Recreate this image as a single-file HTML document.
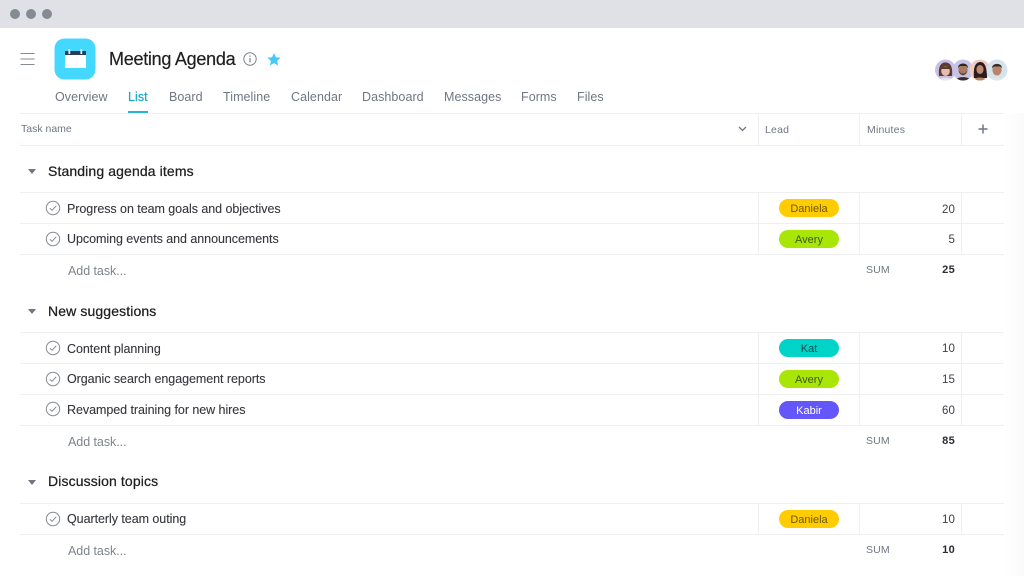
<!DOCTYPE html>
<html><head><meta charset="utf-8"><style>
html,body{margin:0;padding:0;background:#fff}
#p{position:relative;width:1024px;height:576px;overflow:hidden;background:#fff;font-family:"Liberation Sans",sans-serif;filter:blur(.3px)}
#p>*{position:absolute}
.t{white-space:nowrap;line-height:16px}
.h{background:#edeff1;height:1px;left:20px;width:984px}
.v{background:#edeff1;width:1px}
.nav{font-size:12.5px;top:89px;color:#6f7782;letter-spacing:.06px}
.sec{font-size:14px;left:48px;color:#1e1f21;letter-spacing:.12px;-webkit-text-stroke:.25px #1e1f21}
.task{font-size:12.5px;left:67px;color:#34363c;letter-spacing:-.05px;-webkit-text-stroke:.1px #34363c}
.add{font-size:12.5px;left:68px;color:#7f858e;letter-spacing:-.05px}
.pill{left:779px;width:60px;height:18px;border-radius:9px;text-align:center;font-size:11px;line-height:20px;letter-spacing:0}
.d{background:#ffcc00;color:#6d5700}.a{background:#a9e607;color:#3e5a00}.k{background:#00d4c8;color:#0a4f4b}.b{background:#6457f9;color:#fff}
.n{font-size:11.5px;right:69px;color:#3d4047;letter-spacing:.1px}
.s{font-size:10.5px;left:866px;color:#6f7782;letter-spacing:.15px}
.sb{font-size:11px;right:69px;color:#2b2d33;font-weight:bold;letter-spacing:.3px}
.tri{left:28px;width:0;height:0;border-left:4.5px solid transparent;border-right:4.5px solid transparent;border-top:5px solid #6f7782}
.c{left:45px}
.hd{font-size:10.5px;color:#6f7782;letter-spacing:.2px}
</style></head><body><div id="p">
<div style="left:0;top:0;width:1024px;height:28px;background:#dfe1e6"></div>
<div style="left:10px;top:9px;width:10px;height:10px;border-radius:50%;background:#858b93"></div>
<div style="left:26px;top:9px;width:10px;height:10px;border-radius:50%;background:#858b93"></div>
<div style="left:42px;top:9px;width:10px;height:10px;border-radius:50%;background:#858b93"></div>
<div style="left:1004px;top:113px;width:20px;height:463px;background:linear-gradient(90deg,#fff,#fafafa)"></div>

<svg style="left:20px;top:52px" width="15" height="14"><path d="M0.5 1.500H14.500M0.500 7H14.500M0.500 12.500H14.500" stroke="#868c94" stroke-width="1" fill="none"/></svg>

<svg style="left:54px;top:38px" width="42" height="42" viewBox="0 0 42 42"><rect x=".5" y=".5" width="41" height="41" rx="10" fill="#45d8ff"/><rect x="11" y="13" width="21" height="5" fill="#2a3a5c"/><rect x="11" y="17" width="21" height="13" fill="#fff"/><rect x="14.400" y="11" width="1.800" height="5" fill="#e8eef2"/><rect x="26.400" y="11" width="1.800" height="5" fill="#e8eef2"/></svg>

<div class="t" style="left:109px;top:49px;font-size:18px;line-height:20px;color:#1e1f21;letter-spacing:-.27px;-webkit-text-stroke:.2px #1e1f21">Meeting Agenda</div>
<svg style="left:243px;top:52px" width="14" height="14" viewBox="0 0 14 14"><circle cx="7" cy="7" r="6.200" fill="none" stroke="#7d838c" stroke-width="1"/><rect x="6.400" y="6" width="1.200" height="4.500" fill="#7d838c"/><rect x="6.400" y="3.500" width="1.200" height="1.300" fill="#7d838c"/></svg>
<svg style="left:267px;top:53px" width="14" height="13" viewBox="0 0 14 13"><path d="M7 0L8.900 4.300L13.600 4.800L10.100 7.900L11.100 12.500L7 10.100L2.900 12.500L3.900 7.900L.4 4.800L5.100 4.300Z" fill="#45c9f7"/></svg>

<svg style="left:934px;top:58px" width="74" height="24" viewBox="0 0 74 24">
<defs>
<clipPath id="a1"><circle cx="11.500" cy="12" r="10.500"/></clipPath>
<clipPath id="a2"><circle cx="29" cy="12" r="10.500"/></clipPath>
<clipPath id="a3"><circle cx="46" cy="12" r="10.500"/></clipPath>
<clipPath id="a4"><circle cx="63" cy="12" r="10.500"/></clipPath>
</defs>
<g clip-path="url(#a1)"><rect x="0" y="0" width="23" height="24" fill="#c9c0ea"/><path d="M5 18C4 8 7 4.500 11.500 4.500C16 4.500 19 8 18 18Z" fill="#5a3b30"/><ellipse cx="11.500" cy="13" rx="4.300" ry="5" fill="#e6bcaa"/><path d="M7 11C8 7.500 15 7.500 16 11Z" fill="#5a3b30"/><path d="M3 24C5 18.500 18 18.500 20 24Z" fill="#ece4e4"/></g>
<g clip-path="url(#a2)"><rect x="18" y="0" width="23" height="24" fill="#c9c2e8"/><ellipse cx="29" cy="12" rx="4.600" ry="5.500" fill="#a87a62"/><path d="M24 10C24 4 34 4 34 10L32 8H26Z" fill="#2b2523"/><path d="M25 13C26 18 32 18 33 13L31 15.500H27Z" fill="#3a2e2a"/><path d="M20 24C21 17.500 37 17.500 38 24Z" fill="#322c2a"/></g>
<g clip-path="url(#a3)"><rect x="35" y="0" width="23" height="24" fill="#f0cdc2"/><path d="M40 20C39 9 41.500 4 46.500 4C51 4 53 10 53 20Z" fill="#2a1d1c"/><ellipse cx="46" cy="11.500" rx="3.600" ry="4.500" fill="#c08a70"/><path d="M38 24C40 18 51 18 54 24Z" fill="#b98369"/></g>
<g clip-path="url(#a4)"><rect x="52" y="0" width="23" height="24" fill="#d5e3ec"/><path d="M55 24C56 18.500 70 18.500 71 24Z" fill="#e7e5e0"/><ellipse cx="63" cy="12" rx="4.600" ry="5.500" fill="#b98369"/><path d="M58 10C58 4.500 68 4.500 68 10L66 8.500H60Z" fill="#3a2a25"/></g>
</svg>

<div class="t nav" style="left:55px">Overview</div>
<div class="t nav" style="left:128px;color:#1aa7c9;-webkit-text-stroke:.2px #1aa7c9">List</div>
<div class="t nav" style="left:169px">Board</div>
<div class="t nav" style="left:223px">Timeline</div>
<div class="t nav" style="left:291px">Calendar</div>
<div class="t nav" style="left:362px">Dashboard</div>
<div class="t nav" style="left:444px">Messages</div>
<div class="t nav" style="left:521px">Forms</div>
<div class="t nav" style="left:577px">Files</div>
<div style="left:128px;top:111px;width:20px;height:2px;background:#2bb3d6"></div>

<div class="h" style="top:113px"></div><div class="h" style="top:145px"></div>
<div class="v" style="left:758px;top:113px;height:32px"></div>
<div class="v" style="left:859px;top:113px;height:32px"></div>
<div class="v" style="left:961px;top:113px;height:32px"></div>
<div class="t hd" style="left:21px;top:121px;letter-spacing:0">Task name</div>
<svg style="left:738px;top:126px" width="9" height="6"><path d="M1 1L4.500 4.500L8 1" stroke="#6f7782" stroke-width="1.300" fill="none"/></svg>
<div class="t hd" style="left:765px;top:122px">Lead</div>
<div class="t hd" style="left:867px;top:122px">Minutes</div>
<svg style="left:978px;top:124px" width="10" height="10"><path d="M5 .5V9.500M.5 5H9.500" stroke="#6f7782" stroke-width="1.500"/></svg>

<!-- Section 1 -->
<div class="tri" style="top:169px"></div>
<div class="t sec" style="top:163px">Standing agenda items</div>
<div class="h" style="top:192px"></div><div class="h" style="top:223px"></div><div class="h" style="top:254px"></div>
<div class="v" style="left:758px;top:192px;height:62px"></div><div class="v" style="left:859px;top:192px;height:62px"></div><div class="v" style="left:961px;top:192px;height:62px"></div>
<svg class="c" style="top:200px" width="16" height="16" viewBox="0 0 16 16"><circle cx="8" cy="8" r="6.700" fill="none" stroke="#868c94"/><path d="M4.800 8.200L7 10.300L11.200 5.900" fill="none" stroke="#868c94"/></svg>
<div class="t task" style="top:200.500px">Progress on team goals and objectives</div>
<div class="pill d" style="top:199px">Daniela</div><div class="t n" style="top:201.500px">20</div>
<svg class="c" style="top:231px" width="16" height="16" viewBox="0 0 16 16"><circle cx="8" cy="8" r="6.700" fill="none" stroke="#868c94"/><path d="M4.800 8.200L7 10.300L11.200 5.900" fill="none" stroke="#868c94"/></svg>
<div class="t task" style="top:231px">Upcoming events and announcements</div>
<div class="pill a" style="top:230px">Avery</div><div class="t n" style="top:232px">5</div>
<div class="t add" style="top:262.500px">Add task...</div>
<div class="t s" style="top:261.500px">SUM</div><div class="t sb" style="top:262px">25</div>

<!-- Section 2 -->
<div class="tri" style="top:309px"></div>
<div class="t sec" style="top:303px">New suggestions</div>
<div class="h" style="top:332px"></div><div class="h" style="top:363px"></div><div class="h" style="top:394px"></div><div class="h" style="top:425px"></div>
<div class="v" style="left:758px;top:332px;height:93px"></div><div class="v" style="left:859px;top:332px;height:93px"></div><div class="v" style="left:961px;top:332px;height:93px"></div>
<svg class="c" style="top:340px" width="16" height="16" viewBox="0 0 16 16"><circle cx="8" cy="8" r="6.700" fill="none" stroke="#868c94"/><path d="M4.800 8.200L7 10.300L11.200 5.900" fill="none" stroke="#868c94"/></svg>
<div class="t task" style="top:340.500px">Content planning</div>
<div class="pill k" style="top:339px">Kat</div><div class="t n" style="top:341px">10</div>
<svg class="c" style="top:371px" width="16" height="16" viewBox="0 0 16 16"><circle cx="8" cy="8" r="6.700" fill="none" stroke="#868c94"/><path d="M4.800 8.200L7 10.300L11.200 5.900" fill="none" stroke="#868c94"/></svg>
<div class="t task" style="top:371px">Organic search engagement reports</div>
<div class="pill a" style="top:370px">Avery</div><div class="t n" style="top:372px">15</div>
<svg class="c" style="top:401px" width="16" height="16" viewBox="0 0 16 16"><circle cx="8" cy="8" r="6.700" fill="none" stroke="#868c94"/><path d="M4.800 8.200L7 10.300L11.200 5.900" fill="none" stroke="#868c94"/></svg>
<div class="t task" style="top:402px">Revamped training for new hires</div>
<div class="pill b" style="top:401px">Kabir</div><div class="t n" style="top:403px">60</div>
<div class="t add" style="top:433.500px">Add task...</div>
<div class="t s" style="top:432.500px">SUM</div><div class="t sb" style="top:433px">85</div>

<!-- Section 3 -->
<div class="tri" style="top:480px"></div>
<div class="t sec" style="top:473px">Discussion topics</div>
<div class="h" style="top:503px"></div><div class="h" style="top:534px"></div>
<div class="v" style="left:758px;top:503px;height:31px"></div><div class="v" style="left:859px;top:503px;height:31px"></div><div class="v" style="left:961px;top:503px;height:31px"></div>
<svg class="c" style="top:511px" width="16" height="16" viewBox="0 0 16 16"><circle cx="8" cy="8" r="6.700" fill="none" stroke="#868c94"/><path d="M4.800 8.200L7 10.300L11.200 5.900" fill="none" stroke="#868c94"/></svg>
<div class="t task" style="top:511px">Quarterly team outing</div>
<div class="pill d" style="top:510px">Daniela</div><div class="t n" style="top:512px">10</div>
<div class="t add" style="top:542.500px">Add task...</div>
<div class="t s" style="top:541.500px">SUM</div><div class="t sb" style="top:542px">10</div>
</div></body></html>
